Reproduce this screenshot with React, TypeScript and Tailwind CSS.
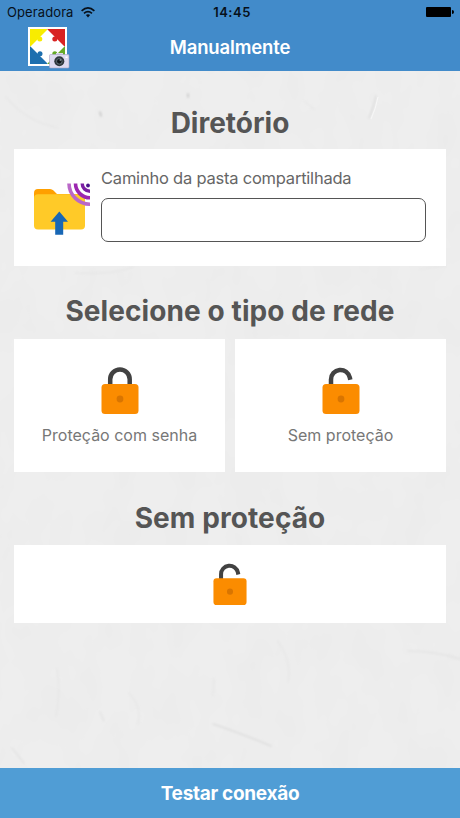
import React from "react";

function PaperTexture() {
  return (
    <svg className="pointer-events-none absolute inset-0 h-full w-full" viewBox="0 0 460 697" preserveAspectRatio="none" aria-hidden="true">
      <defs>
        <filter id="grain" x="0" y="0" width="100%" height="100%">
          <feTurbulence type="fractalNoise" baseFrequency="0.03 0.018" numOctaves="3" seed="8" />
          <feColorMatrix type="matrix" values="0 0 0 0 0.5  0 0 0 0 0.5  0 0 0 0 0.5  0.1 0 0 0 -0.035" />
        </filter>
        <filter id="soft">
          <feGaussianBlur stdDeviation="1.1" />
        </filter>
      </defs>
      <rect width="460" height="697" filter="url(#grain)" />
      <g fill="none" stroke="#dedede" strokeWidth="1.6" strokeLinecap="round" filter="url(#soft)">
        <path d="M376 25 Q374 35 369 47" />
        <path d="M188 23 v3 M100 41 l1 4" stroke="#c6c6c6" />
        <path d="M304 30 l10 8 M6 26 Q25 50 58 57" strokeOpacity=".4" />
        <path d="M213 653 Q240 662 271 675" />
        <path d="M408 580 Q435 580 460 588" strokeOpacity=".6" />
        <path d="M57 598 Q61 621 56 645 M129 622 Q142 636 138 653" strokeOpacity=".4" />
        <path d="M278 570 Q292 590 288 611 M214 607 l-1 18" strokeOpacity=".4" />
        <path d="M12 677 L24 692 M100 641 l4 9" strokeOpacity=".7" />
        <path d="M420 198 L445 195 M75 202 Q113 204 133 196" strokeOpacity=".4" />
      </g>
      <path d="M378 26 Q376 37 371 48" fill="none" stroke="#f6f6f6" strokeWidth="1.2" />
    </svg>
  );
}

function AppLogo() {
  return (
    <svg className="block h-[44px] w-[44px]" viewBox="0 0 44 44" aria-hidden="true">
      <rect x="0" y="0" width="39" height="39" fill="#fff" />
      <path d="M2 2h17.500v17.500H2z" fill="#f8ec00" />
      <path d="M19.500 2H37v17.500H19.500z" fill="#d82222" />
      <path d="M2 19.500h17.500V37H2z" fill="#1d6faf" />
      <path d="M19.500 19.500H37V37H19.500z" fill="#66aa27" />
      <path d="M19.500 2.500L36.500 19.500L19.500 36.500L2.500 19.500Z" fill="#fff" />
      <circle cx="11.800" cy="12" r="2.500" fill="#f8ec00" />
      <circle cx="26.800" cy="12" r="2.500" fill="#d82222" />
      <circle cx="12" cy="26.800" r="2.500" fill="#1d6faf" />
      <circle cx="26.800" cy="26.800" r="2.500" fill="#66aa27" />
      <path d="M28 26h7v3h-7z" fill="#d9d5ec" />
      <rect x="21.500" y="27.500" width="19.500" height="13.500" rx="1" fill="#dedaf0" stroke="#aaa5c4" strokeWidth=".6" />
      <rect x="37.500" y="29.500" width="2" height="1.500" fill="#fff" />
      <circle cx="31.300" cy="34.300" r="5" fill="#30383e" />
      <circle cx="31.300" cy="34.300" r="2.800" fill="#10161b" stroke="#73808a" strokeWidth=".8" />
      <circle cx="32.300" cy="33" r=".8" fill="#acb9c3" />
    </svg>
  );
}

function WifiGlyph() {
  return (
    <svg className="block h-[11px] w-[14px]" viewBox="0 0 14 11" aria-hidden="true">
      <g fill="none" stroke="#07101a" strokeWidth="1.700">
        <path d="M.6 3.800 Q7 -1.900 13.400 3.800" />
        <path d="M3 6.300 Q7 2.900 11 6.300" />
      </g>
      <path d="M4.900 8.100 Q7 6.400 9.100 8.100 L7 10.400Z" fill="#07101a" />
    </svg>
  );
}

function SharedFolder() {
  return (
    <svg className="block h-[53px] w-[57px]" viewBox="0 0 57 53" aria-hidden="true">
      <path d="M0 16V11Q0 7 4 7H16Q18 7 19.500 8.500L23 12H47V20H0Z" fill="#ffa000" />
      <path d="M4 12.300H47Q51 12.300 51 16.300V43.500Q51 47.500 47 47.500H4Q0 47.500 0 43.500V16.300Q0 12.300 4 12.300Z" fill="#ffca28" />
      <path d="M25.300 29.500L34 39.800H29.200V52.800H21.200V39.800H16.600Z" fill="#1867b5" />
      <g fill="none">
        <path d="M35 1.500A21 21 0 0 0 56 22.200" stroke="#ba68c8" strokeWidth="3.600" />
        <path d="M41.500 1.500A14.500 14.500 0 0 0 56 15.800" stroke="#9c27b0" strokeWidth="3.600" />
        <path d="M48.200 1.500A7.800 7.800 0 0 0 56 9.300" stroke="#7b1fa2" strokeWidth="3.400" />
      </g>
      <circle cx="54" cy="3.500" r="1.900" fill="#4a148c" />
    </svg>
  );
}

function Padlock({ open = false, className }: { open?: boolean; className: string }) {
  return (
    <svg className={className} viewBox="0 0 38 48" aria-hidden="true">
      <path
        d={open ? "M9 18V12.500A9.500 9.500 0 0 1 27.800 10.500L28.300 12.800" : "M9.200 18V12.300A9.750 9.750 0 0 1 28.700 12.300V18"}
        fill="none" stroke="#424242" strokeWidth="4.500"
      />
      <rect x=".5" y="17" width="37" height="30" rx="3.500" fill="#fb8c00" />
      <circle cx="19" cy="32" r="3.400" fill="#d97500" />
    </svg>
  );
}

function Heading({ children, className }: { children: React.ReactNode; className: string }) {
  return <h2 className={`text-center font-bold whitespace-nowrap text-[#555555] ${className}`}>{children}</h2>;
}

export default function App() {
  return (
    <div className="flex h-[818px] w-[460px] flex-col overflow-hidden bg-[#eeeeee] font-['Inter',sans-serif]">
      <header className="h-[71px] shrink-0 bg-[#428bca]">
        <div className="grid h-[24px] grid-cols-3 items-center pr-[6px] pl-[7px] text-[13px] text-[#07101a]">
          <div className="flex items-center gap-[7px]">
            <span className="pt-px tracking-[0.1px]">Operadora</span>
            <WifiGlyph />
          </div>
          <span className="pt-px pl-[3px] text-center font-semibold tracking-[0.5px]">14:45</span>
          <div className="flex items-center justify-end gap-px">
            <span className="h-[10px] w-[25px] rounded-[1px] bg-black" />
            <span className="h-[4px] w-[2px] rounded-r-full bg-black" />
          </div>
        </div>
        <div className="grid h-[47px] grid-cols-[28px_1fr_28px]">
          <div className="w-[72px] pt-[3px] pl-[28px]"><AppLogo /></div>
          <h1 className="pt-[9px] text-center text-[18.5px] leading-[28px] font-semibold tracking-[-0.15px] text-white">Manualmente</h1>
        </div>
      </header>

      <main className="relative h-[697px] shrink-0 overflow-hidden">
        <PaperTexture />
        <div className="relative px-[14px]">
          <Heading className="pt-[32px] text-[28px] leading-[40px]">Diretório</Heading>
          <section className="mt-[6px] flex h-[117px] bg-white pl-[20px]">
            <div className="w-[67px] shrink-0 pt-[33px]"><SharedFolder /></div>
            <div className="pt-[17px]">
              <label htmlFor="path" className="block text-[16.5px] leading-[24px] tracking-[-0.22px] whitespace-nowrap text-[#666666]">Caminho da pasta compartilhada</label>
              <input id="path" className="mt-[8px] block h-[44px] w-[325px] rounded-[7px] border border-[#555] bg-white px-2 outline-none" />
            </div>
          </section>
          <Heading className="pt-[25px] text-[28px] leading-[40px] tracking-[0.09px]">Selecione o tipo de rede</Heading>
          <div className="mt-[8px] grid h-[133px] grid-cols-2 gap-[10px] text-[16px] text-[#777777]">
            <button className="flex flex-col items-center bg-white pt-[28px]">
              <Padlock className="h-[48px] w-[38px]" />
              <span className="mt-[8px] leading-[24px] whitespace-nowrap">Proteção com senha</span>
            </button>
            <button className="flex flex-col items-center bg-white pt-[28px]">
              <Padlock open className="h-[48px] w-[38px]" />
              <span className="mt-[8px] leading-[24px] whitespace-nowrap">Sem proteção</span>
            </button>
          </div>
          <Heading className="pt-[26px] text-[28px] leading-[40px] tracking-[0.09px]">Sem proteção</Heading>
          <section className="mt-[7px] flex h-[78px] justify-center bg-white pt-[18px]">
            <Padlock open className="h-[43px] w-[34px]" />
          </section>
        </div>
      </main>

      <button className="h-[50px] shrink-0 bg-[#509dd5] pt-px text-center text-[19px] leading-[49px] font-bold tracking-[-0.3px] text-white">Testar conexão</button>
    </div>
  );
}
